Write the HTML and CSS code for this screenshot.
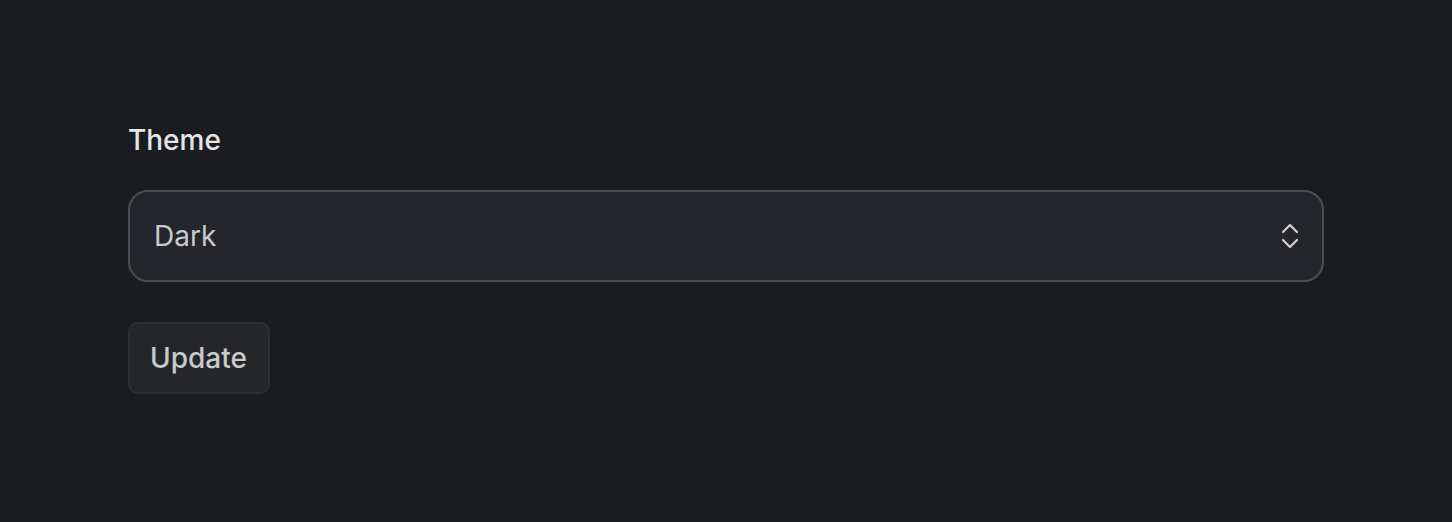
FILE: index.html
```html
<!DOCTYPE html>
<html lang="en">
<head>
<meta charset="utf-8">
<title>Theme</title>
<link rel="stylesheet" href="styles.css">
</head>
<body>
<main class="form">
  <label class="label" for="theme">Theme</label>
  <div class="select" id="theme">
    <span class="select-value">Dark</span>
    <svg class="chevrons" width="20" height="30" viewBox="0 0 20 30" fill="none" stroke="currentColor" stroke-width="2.2" stroke-linecap="round" stroke-linejoin="round">
      <path d="M3 11 L10 4 L17 11"/>
      <path d="M3 19 L10 26 L17 19"/>
    </svg>
  </div>
  <button class="button" type="button">Update</button>
</main>
</body>
</html>
```
FILE: styles.css
```css
html, body {
  margin: 0;
  padding: 0;
  background: #1b1c20;
  height: 100%;
}
body {
  font-family: Inter, "Noto Sans", sans-serif;
  color: #c1c2c5;
}
.form {
  display: flex;
  flex-direction: column;
  align-items: flex-start;
  padding: 120px 128px 0 128px;
}
.label {
  font-size: 28px;
  line-height: 40px;
  font-weight: 500;
  color: #e4e5e8;
  margin-bottom: 30px;
}
.select {
  box-sizing: border-box;
  width: 100%;
  height: 92px;
  display: flex;
  align-items: center;
  justify-content: space-between;
  background: #25262b;
  border: 2px solid #4b4d53;
  border-radius: 20px;
  padding: 0 22px 0 24px;
  font-size: 28px;
  color: #c9cacd;
}
.chevrons {
  color: #d0d1d4;
  display: block;
}
.button {
  margin-top: 40px;
  box-sizing: border-box;
  height: 72px;
  padding: 0 21px 0 20px;
  display: flex;
  align-items: center;
  background: #25262a;
  border: 2px solid #2e2f34;
  border-radius: 10px;
  font-family: Inter, "Noto Sans", sans-serif;
  font-size: 28px;
  font-weight: 500;
  color: #c9cacd;
}
```
